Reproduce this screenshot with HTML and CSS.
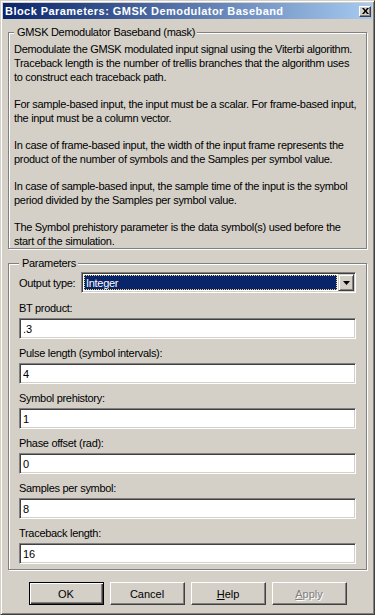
FILE: index.html
```html
<!DOCTYPE html>
<html lang="en">
  <head>
    <meta charset="UTF-8" />
    <meta name="viewport" content="width=device-width, initial-scale=1.0" />
    <title>Block Parameters: GMSK Demodulator Baseband</title>
    <link rel="stylesheet" href="styles.css">
  </head>

  <body>
    <div class="window">
      <div class="caption">
        <span class="caption-title">Block Parameters: GMSK Demodulator Baseband</span>
        <button class="caption-close" type="button" aria-label="Close">
          <svg width="7" height="6" viewBox="0 0 7 6">
            <path d="M0 0h2l1.5 2L5 0h2L4.5 3 7 6H5L3.5 4 2 6H0l2.5-3z" fill="#000"/>
          </svg>
        </button>
      </div>

      <div class="client">
        <fieldset class="group group-desc">
          <legend>GMSK Demodulator Baseband (mask)</legend>
          <p>Demodulate the GMSK modulated input signal using the Viterbi algorithm.<br>
            Traceback length is the number of trellis branches that the algorithm uses<br>
            to construct each traceback path.</p>
          <p>For sample-based input, the input must be a scalar. For frame-based input,<br>
            the input must be a column vector.</p>
          <p>In case of frame-based input, the width of the input frame represents the<br>
            product of the number of symbols and the Samples per symbol value.</p>
          <p>In case of sample-based input, the sample time of the input is the symbol<br>
            period divided by the Samples per symbol value.</p>
          <p>The Symbol prehistory parameter is the data symbol(s) used before the<br>
            start of the simulation.</p>
        </fieldset>

        <fieldset class="group group-params">
          <legend>Parameters</legend>
          <div class="select-row">
            <label class="select-label">Output type:</label>
            <div class="combo">
              <span class="combo-value">Integer</span>
              <span class="combo-btn">
                <svg width="7" height="4" viewBox="0 0 7 4"><path d="M0 0h7L3.5 4z" fill="#000"/></svg>
              </span>
            </div>
          </div>

          <div class="field first">
            <label for="bt">BT product:</label>
            <input class="edit" id="bt" type="text" value=".3" />
          </div>
          <div class="field">
            <label for="pulse">Pulse length (symbol intervals):</label>
            <input class="edit" id="pulse" type="text" value="4" />
          </div>
          <div class="field">
            <label for="prehist">Symbol prehistory:</label>
            <input class="edit" id="prehist" type="text" value="1" />
          </div>
          <div class="field">
            <label for="phase">Phase offset (rad):</label>
            <input class="edit" id="phase" type="text" value="0" />
          </div>
          <div class="field">
            <label for="sps">Samples per symbol:</label>
            <input class="edit" id="sps" type="text" value="8" />
          </div>
          <div class="field">
            <label for="tb">Traceback length:</label>
            <input class="edit" id="tb" type="text" value="16" />
          </div>
        </fieldset>

        <div class="buttons">
          <button class="btn btn-default" type="button">OK</button>
          <button class="btn" type="button">Cancel</button>
          <button class="btn" type="button"><u>H</u>elp</button>
          <button class="btn" type="button" disabled><u>A</u>pply</button>
        </div>
      </div>
    </div>
  </body>
</html>
```

FILE: styles.css
```css
* {
  box-sizing: border-box;
}

body {
  margin: 0;
  background-color: #d4d0c8;
  font-family: "Liberation Sans", Arial, sans-serif;
  font-size: 11px;
  letter-spacing: -0.3px;
  color: #000;
}

.window {
  width: 375px;
  height: 615px;
  display: flex;
  flex-direction: column;
  padding: 2px;
  border: 1px solid;
  border-color: #d4d0c8 #404040 #404040 #d4d0c8;
  box-shadow: inset 1px 1px 0 #fff, inset -1px -1px 0 #808080;
}

/* title bar */
.caption {
  height: 16px;
  display: flex;
  align-items: center;
  justify-content: space-between;
  padding: 0 1px 0 2px;
  background: linear-gradient(to right, #0a246a, #a6caf0);
  color: #fff;
}

.caption-title {
  font-weight: bold;
  font-size: 11px;
  letter-spacing: 0.45px;
}

.caption-close {
  width: 12px;
  height: 11px;
  padding: 0;
  display: flex;
  align-items: center;
  justify-content: center;
  background-color: #d4d0c8;
  border: 1px solid;
  border-color: #fff #404040 #404040 #fff;
  box-shadow: inset -1px -1px 0 #808080;
}

.client {
  padding: 0 5px;
}

/* group boxes */
.group {
  margin: 6px 0 0;
  border: 1px solid #808080;
  box-shadow: 1px 1px 0 #fff, inset 1px 1px 0 #fff;
  line-height: 14px;
}

.group legend {
  padding: 0 2px 0 3px;
  background-color: #d4d0c8;
  line-height: 14px;
}

.group-desc {
  padding: 3px 5px 0 5px;
}

.group-desc p {
  margin: 0 0 13px;
  white-space: nowrap;
}

.group-desc p:last-child {
  margin-bottom: 0;
}

.group-params {
  margin-top: 7px;
  padding: 2px 10px 5px 10px;
}

.select-row {
  display: flex;
  align-items: center;
}

.select-label {
  width: 62px;
}

.combo {
  flex: 1;
  height: 21px;
  display: flex;
  padding: 1px;
  background-color: #fff;
  border: 1px solid;
  border-color: #808080 #fff #fff #808080;
  box-shadow: inset 1px 1px 0 #404040, inset -1px -1px 0 #d4d0c8;
}

.combo-value {
  flex: 1;
  margin: 1px;
  padding-left: 1px;
  background-color: #0a246a;
  border: 1px dotted #e8d878;
  color: #fff;
  line-height: 15px;
}

.combo-btn {
  width: 16px;
  display: flex;
  align-items: center;
  justify-content: center;
  background-color: #d4d0c8;
  border: 1px solid;
  border-color: #d4d0c8 #404040 #404040 #d4d0c8;
  box-shadow: inset 1px 1px 0 #fff, inset -1px -1px 0 #808080;
}

.field {
  margin-top: 7px;
}

.field.first {
  margin-top: 8px;
}

.field label {
  display: block;
  margin-bottom: 3px;
}

.edit {
  display: block;
  width: 100%;
  height: 21px;
  margin: 0;
  padding: 0 3px;
  font-family: "Liberation Sans", Arial, sans-serif;
  font-size: 11px;
  color: #000;
  background-color: #fff;
  border: 1px solid;
  border-color: #808080 #fff #fff #808080;
  box-shadow: inset 1px 1px 0 #404040, inset -1px -1px 0 #d4d0c8;
  outline: none;
}

/* dialog buttons */
.buttons {
  margin-top: 12px;
  display: flex;
  justify-content: center;
  gap: 6px;
}

.btn {
  width: 75px;
  height: 23px;
  padding: 0;
  font-family: "Liberation Sans", Arial, sans-serif;
  font-size: 11px;
  color: #000;
  background-color: #d4d0c8;
  border: 1px solid;
  border-color: #fff #404040 #404040 #fff;
  box-shadow: inset -1px -1px 0 #808080;
}

.btn-default {
  border-color: #000;
  box-shadow: inset 1px 1px 0 #fff, inset -1px -1px 0 #404040, inset -2px -2px 0 #808080;
}

.btn:disabled {
  color: #808080;
  text-shadow: 1px 1px 0 #fff;
}
```
